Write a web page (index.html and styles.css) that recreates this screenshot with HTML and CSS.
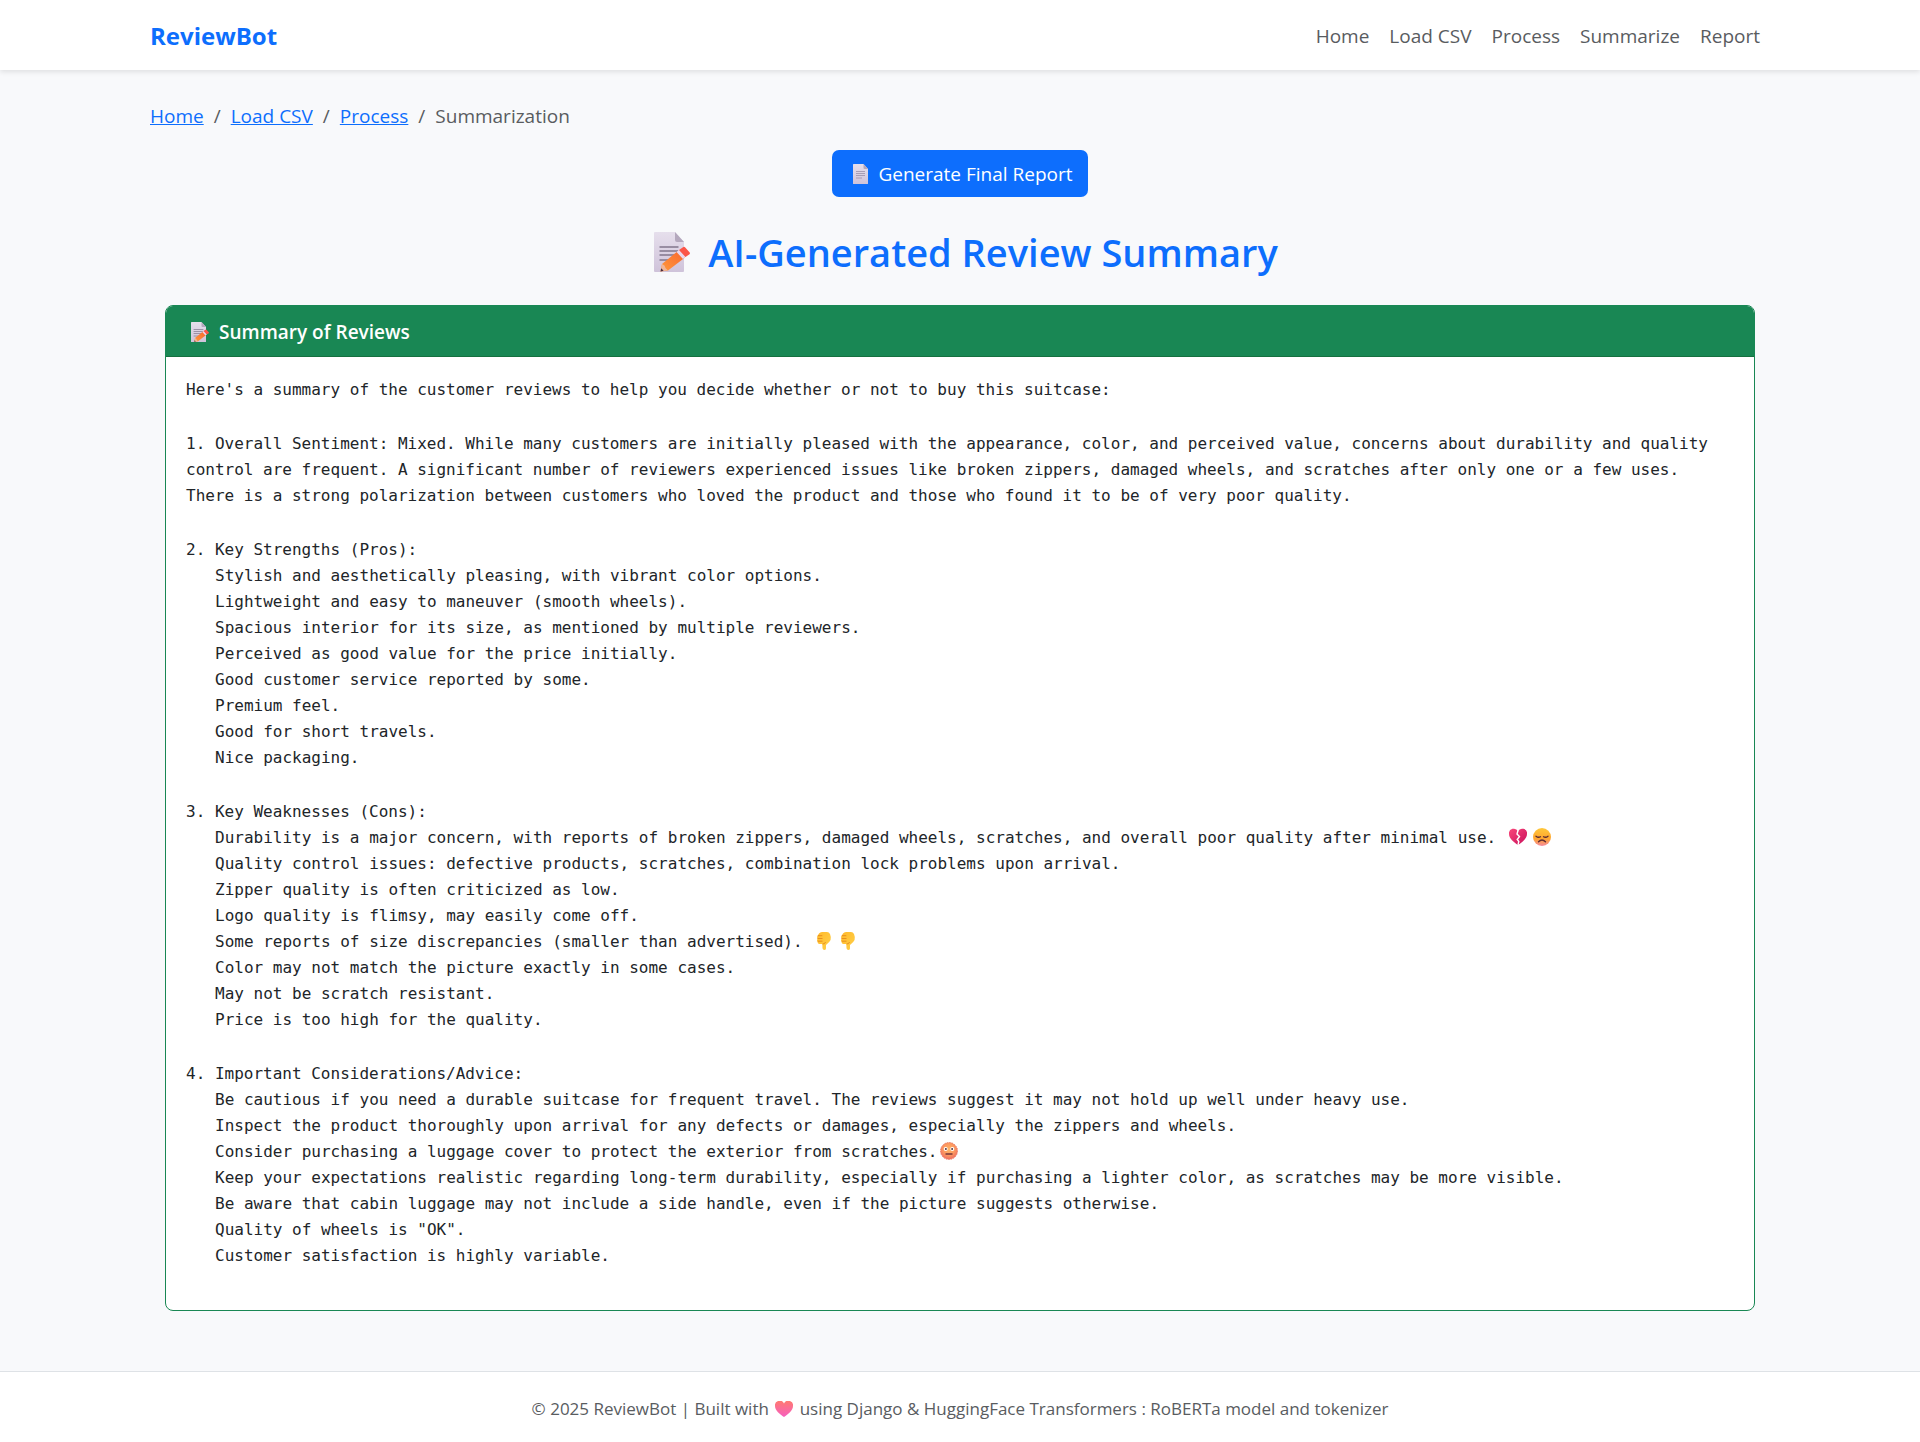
FILE: index.html
```html
<!DOCTYPE html>
<html lang="en">
<head>
<meta charset="utf-8">
<meta name="viewport" content="width=device-width, initial-scale=1">
<title>ReviewBot - Summarization</title>
<link rel="stylesheet" href="styles.css">
</head>
<body>
<svg class="sprite" aria-hidden="true">
  <defs>
    <linearGradient id="paper" x1="0" y1="0" x2="0" y2="1"><stop offset="0" stop-color="#e6dfec"/><stop offset="1" stop-color="#cfc3da"/></linearGradient>
    <linearGradient id="pencil" x1="0" y1="1" x2="1" y2="0"><stop offset="0" stop-color="#ff9a3c"/><stop offset="1" stop-color="#f8652e"/></linearGradient>
    <linearGradient id="heart-fill" x1="0" y1="0" x2="0" y2="1"><stop offset="0" stop-color="#ff7a70"/><stop offset="1" stop-color="#f65fc0"/></linearGradient>
    <linearGradient id="broken-fill" x1="0" y1="0" x2="1" y2="1"><stop offset="0" stop-color="#f9477a"/><stop offset="1" stop-color="#c9105c"/></linearGradient>
    <linearGradient id="face-fill" x1="0" y1="0" x2="0" y2="1"><stop offset="0" stop-color="#ffc83a"/><stop offset=".6" stop-color="#ffa530"/><stop offset="1" stop-color="#f58aa0"/></linearGradient>
    <linearGradient id="hand-fill" x1="0" y1="0" x2="1" y2="1"><stop offset="0" stop-color="#ffb92a"/><stop offset="1" stop-color="#ffd04a"/></linearGradient>
    <radialGradient id="hot-fill" cx=".5" cy=".4" r=".6"><stop offset="0" stop-color="#ffb765"/><stop offset=".6" stop-color="#fb9560"/><stop offset="1" stop-color="#ee6c62"/></radialGradient>
  </defs>
  <symbol id="page" viewBox="0 0 32 40">
    <path d="M1 0h20l9 10v29a1 1 0 0 1-1 1H1a1 1 0 0 1-1-1V1a1 1 0 0 1 1-1z" fill="url(#paper)"/>
    <path d="M21 0l9 10h-7a2 2 0 0 1-2-2z" fill="#b4a8bd"/>
    <path d="M6 15h18M6 19h18M6 23h18M6 28h12" stroke="#9c8fa8" stroke-width="1.600"/>
  </symbol>
  <symbol id="memo" viewBox="0 0 36 40">
    <path d="M1 0h20l9 10v29a1 1 0 0 1-1 1H1a1 1 0 0 1-1-1V1a1 1 0 0 1 1-1z" fill="url(#paper)"/>
    <path d="M21 0l9 10h-7a2 2 0 0 1-2-2z" fill="#b4a8bd"/>
    <path d="M6 15h18M6 19h18M6 23h14M6 28h9" stroke="#81768c" stroke-width="1.400" stroke-linecap="round"/>
    <path d="M6.500 39.500l1.500-7.500L24.500 18.500l6.500 7L14 38.500z" fill="url(#pencil)"/>
    <path d="M6.500 39.500l1.500-7.500 2.500 1.500 1 2.500 2.500 2.500z" fill="#efb69a"/>
    <path d="M6.500 39.500l.7-3.200 2.400 2.500z" fill="#4b2c3c"/>
    <path d="M22.500 20l3-2.500 6.500 7-3 2.500z" fill="#e9d8ee"/>
    <path d="M25 18l4-2.700a1.500 1.500 0 0 1 2 0l4.500 5a1.500 1.500 0 0 1 0 2L31.500 25z" fill="#fb5548"/>
  </symbol>
  <symbol id="heart" viewBox="0 0 18 16">
    <path d="M9 16C5 13.500 0 9.500 0 5a4.700 4.700 0 0 1 9-2.400A4.700 4.700 0 0 1 18 5c0 4.500-5 8.500-9 11z" fill="url(#heart-fill)"/>
  </symbol>
  <symbol id="broken-heart" viewBox="0 0 18 16">
    <path d="M9 16C5 13.500 0 9.500 0 5a4.700 4.700 0 0 1 9-2.400A4.700 4.700 0 0 1 18 5c0 4.500-5 8.500-9 11z" fill="url(#broken-fill)"/>
    <path d="M9 1.500L8 5l2.500 2.500L8.200 10.500l1.600 2-.8 3.500" fill="none" stroke="#fff" stroke-width="1.400"/>
  </symbol>
  <symbol id="sad" viewBox="0 0 18 18">
    <circle cx="9" cy="9" r="9" fill="url(#face-fill)"/>
    <path d="M3 8.200q2.200 1.800 4.500.5M10.500 8.700q2.300 1.300 4.500-.5M5.500 13.800q3.500-3.600 7 0" fill="none" stroke="#5b2b33" stroke-width="1.300" stroke-linecap="round"/>
  </symbol>
  <symbol id="thumb-down" viewBox="0 0 14 18">
    <path d="M2 1.500Q3 0 5 0h5q2 0 3 2l.8 3q.4 3-1.600 5L9 13v3.500Q8.800 18 7.300 18T5.500 16.200L5.300 12H2.500Q.6 12 .6 10.200L0 8.500 .5 6.500 0 5l.8-1.500z" fill="url(#hand-fill)"/>
    <path d="M.8 3.700h4.500M.5 6.500h5M.8 9.200h4.700M5.500 12q2.500.2 3-2" fill="none" stroke="#e58a1c" stroke-width=".9"/>
  </symbol>
  <symbol id="flushed" viewBox="0 0 18 18">
    <circle cx="9" cy="9" r="8.500" fill="url(#hot-fill)" stroke="#e9826a" stroke-dasharray="1.500 1"/>
    <circle cx="5.700" cy="7" r="2" fill="#fff"/><circle cx="12.300" cy="7" r="2" fill="#fff"/>
    <circle cx="5.900" cy="7" r="1" fill="#54343c"/><circle cx="12.100" cy="7" r="1" fill="#54343c"/>
    <path d="M5.500 12h7" stroke="#7d3b3d" stroke-width="1.600"/>
  </symbol>
</svg>

<header class="navbar">
  <div class="container navbar-inner">
    <a class="brand" href="#">ReviewBot</a>
    <nav class="nav-links" aria-label="Main">
      <a href="#">Home</a>
      <a href="#">Load CSV</a>
      <a href="#">Process</a>
      <a href="#">Summarize</a>
      <a href="#">Report</a>
    </nav>
  </div>
</header>

<main class="container content">
  <nav aria-label="Breadcrumb">
    <ol class="breadcrumb">
      <li><a href="#">Home</a></li>
      <li><a href="#">Load CSV</a></li>
      <li><a href="#">Process</a></li>
      <li aria-current="page">Summarization</li>
    </ol>
  </nav>

  <button class="btn" type="button"><svg class="icon-page" aria-hidden="true"><use href="#page"/></svg>Generate Final Report</button>

  <h1 class="title"><svg class="icon-title" aria-hidden="true"><use href="#memo"/></svg>AI-Generated Review Summary</h1>

  <section class="card">
    <h2 class="card-header"><svg class="icon-memo" aria-hidden="true"><use href="#memo"/></svg>Summary of Reviews</h2>
    <div class="card-body">
      <p>Here's a summary of the customer reviews to help you decide whether or not to buy this suitcase:</p>
      <p>1. Overall Sentiment: Mixed. While many customers are initially pleased with the appearance, color, and perceived value, concerns about durability and quality control are frequent. A significant number of reviewers experienced issues like broken zippers, damaged wheels, and scratches after only one or a few uses. There is a strong polarization between customers who loved the product and those who found it to be of very poor quality.</p>
      <div>
        <p>2. Key Strengths (Pros):</p>
        <ul>
          <li>Stylish and aesthetically pleasing, with vibrant color options.</li>
          <li>Lightweight and easy to maneuver (smooth wheels).</li>
          <li>Spacious interior for its size, as mentioned by multiple reviewers.</li>
          <li>Perceived as good value for the price initially.</li>
          <li>Good customer service reported by some.</li>
          <li>Premium feel.</li>
          <li>Good for short travels.</li>
          <li>Nice packaging.</li>
        </ul>
      </div>
      <div>
        <p>3. Key Weaknesses (Cons):</p>
        <ul>
          <li>Durability is a major concern, with reports of broken zippers, damaged wheels, scratches, and overall poor quality after minimal use. <svg class="emoji" aria-hidden="true"><use href="#broken-heart"/></svg><svg class="emoji" aria-hidden="true"><use href="#sad"/></svg></li>
          <li>Quality control issues: defective products, scratches, combination lock problems upon arrival.</li>
          <li>Zipper quality is often criticized as low.</li>
          <li>Logo quality is flimsy, may easily come off.</li>
          <li>Some reports of size discrepancies (smaller than advertised). <svg class="emoji" aria-hidden="true"><use href="#thumb-down"/></svg><svg class="emoji" aria-hidden="true"><use href="#thumb-down"/></svg></li>
          <li>Color may not match the picture exactly in some cases.</li>
          <li>May not be scratch resistant.</li>
          <li>Price is too high for the quality.</li>
        </ul>
      </div>
      <div>
        <p>4. Important Considerations/Advice:</p>
        <ul>
          <li>Be cautious if you need a durable suitcase for frequent travel. The reviews suggest it may not hold up well under heavy use.</li>
          <li>Inspect the product thoroughly upon arrival for any defects or damages, especially the zippers and wheels.</li>
          <li>Consider purchasing a luggage cover to protect the exterior from scratches.<svg class="emoji" aria-hidden="true"><use href="#flushed"/></svg></li>
          <li>Keep your expectations realistic regarding long-term durability, especially if purchasing a lighter color, as scratches may be more visible.</li>
          <li>Be aware that cabin luggage may not include a side handle, even if the picture suggests otherwise.</li>
          <li>Quality of wheels is "OK".</li>
          <li>Customer satisfaction is highly variable.</li>
        </ul>
      </div>
    </div>
  </section>
</main>

<footer class="footer">
  <p>© 2025 ReviewBot | Built with <svg class="emoji-heart" aria-hidden="true"><use href="#heart"/></svg> using Django &amp; HuggingFace Transformers : RoBERTa model and tokenizer</p>
</footer>
</body>
</html>
```
FILE: styles.css
```css
* {
  box-sizing: border-box;
}

body {
  display: flex;
  flex-direction: column;
  min-height: 100vh;
  margin: 0;
  background: #f8f9fb;
  color: #212529;
  font-family: "Open Sans", "Noto Sans", sans-serif;
  font-size: 19px;
  line-height: 30px;
}

h1, h2, p, ul, ol {
  margin: 0;
  padding: 0;
}

ul, ol {
  list-style: none;
}

.sprite {
  position: absolute;
  width: 0;
  height: 0;
}

.container {
  width: 100%;
  max-width: 1650px;
  margin: 0 auto;
  padding: 0 15px;
}

.navbar {
  background: #fff;
  box-shadow: 0 2px 5px rgba(0, 0, 0, 0.1);
}

.navbar-inner {
  display: flex;
  flex-wrap: wrap;
  align-items: center;
  justify-content: space-between;
  min-height: 70px;
  padding-top: 2px;
}

.brand {
  color: #0d6efd;
  font-size: 24px;
  font-weight: 700;
  text-decoration: none;
}

.nav-links {
  display: flex;
  flex-wrap: wrap;
  gap: 20px;
  padding: 0 10px;
}

.nav-links a {
  color: #595c5f;
  text-decoration: none;
}

.content {
  display: flex;
  flex: 1 0 auto;
  flex-direction: column;
  padding-top: 31px;
  padding-bottom: 59px;
}

.breadcrumb {
  display: flex;
  flex-wrap: wrap;
  margin-bottom: 19px;
  color: #595c5f;
}

.breadcrumb li + li::before {
  content: "/";
  padding: 0 10px;
}

.breadcrumb a {
  color: #0d6efd;
}

.btn {
  display: flex;
  align-items: center;
  align-self: center;
  gap: 9px;
  margin-bottom: 31px;
  padding: 9px 15px 8px 21px;
  border: 0;
  border-radius: 7px;
  background: #0d6efd;
  color: #fff;
  font: inherit;
}

.icon-page {
  width: 16px;
  height: 20px;
}

.title {
  display: flex;
  align-items: center;
  justify-content: center;
  gap: 18px;
  margin-bottom: 29px;
  padding-left: 12px;
  color: #0d6efd;
  font-size: 38px;
  font-weight: 600;
  line-height: 48px;
}

.icon-title {
  flex: none;
  width: 36px;
  height: 40px;
}

.card {
  margin: 0 15px;
  border: 1px solid #198754;
  border-radius: 8px;
  background: #fff;
  overflow: hidden;
}

.card-header {
  display: flex;
  align-items: center;
  gap: 10px;
  padding: 11px 25px 9px;
  border-bottom: 1px solid #16703f;
  background: #198754;
  color: #fff;
  font-size: 19px;
  font-weight: 600;
}

.icon-memo {
  width: 18px;
  height: 20px;
}

.card-body {
  display: flex;
  flex-direction: column;
  gap: 28px;
  padding: 20px 20px 41px;
  font-family: "DejaVu Sans Mono", monospace;
  font-size: 16px;
  line-height: 26px;
}

.card-body ul {
  padding-left: 29px;
}

.emoji {
  width: 18px;
  height: 18px;
  margin: 0 3px;
  vertical-align: -3px;
}

.emoji-heart {
  width: 18px;
  height: 16px;
  margin: 0 2px;
  vertical-align: -2px;
}

.footer {
  padding: 22px 15px 18px;
  border-top: 1px solid #dee2e6;
  background: #fff;
  color: #595c5f;
  font-size: 17px;
  text-align: center;
}
```
